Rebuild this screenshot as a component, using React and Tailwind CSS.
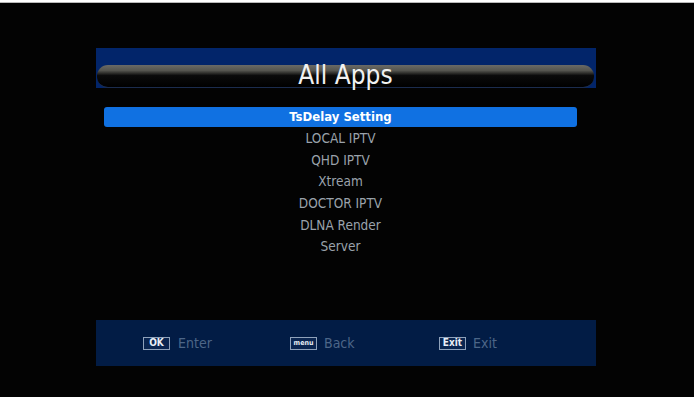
const APPS = ['TsDelay Setting', 'LOCAL IPTV', 'QHD IPTV', 'Xtream', 'DOCTOR IPTV', 'DLNA Render', 'Server']

function KeyCap({ label, small }) {
  return (
    <span
      className={
        'inline-flex items-center justify-center h-[13px] w-[27px] border border-[#8fa2bb] bg-[#0a2550] text-[#e8eef6] font-bold leading-none ' +
        (small ? 'text-[7px]' : 'text-[10px]')
      }
    >
      {label}
    </span>
  )
}

export default function App() {
  return (
    <div className="h-[397px] w-[694px] bg-[#030303] font-['DejaVu_Sans_Condensed','DejaVu_Sans',sans-serif] overflow-hidden">
      {/* top window edge */}
      <div className="h-[3px] bg-white border-b border-[#b9b9b9]" />

      <div className="ml-[96px] w-[500px] mt-[45px]">
        {/* header */}
        <div className="h-[40px] bg-[#02256a] pt-[17px] pl-[1px] pr-[2px]">
          <div className="h-[23px] rounded-[11px] bg-[linear-gradient(to_bottom,#6a6a66_0%,#55554f_25%,#0a0a0a_48%,#000_100%)] border-b border-[#1b2c4e] flex items-center justify-center">
            <span className="text-[26px] leading-none text-[#f1f1f1] -mt-[3px]">All Apps</span>
          </div>
        </div>

        {/* list */}
        <div className="mt-[18px] ml-[8px] w-[473px]">
          {APPS.map((app, i) => (
            <div key={app} className="h-[21.6px] flex items-center">
              {i === 0 ? (
                <div className="h-[20px] w-full rounded-[3px] bg-[#1071e2] flex items-center justify-center text-[13px] font-bold text-white">
                  {app}
                </div>
              ) : (
                <div className="w-full text-center text-[13.5px] text-[#9aa2ab]">{app}</div>
              )}
            </div>
          ))}
        </div>

        {/* footer */}
        <div className="mt-[63px] h-[46px] bg-[#021c45] flex items-center pl-[47px] text-[14px] text-[#4d6688]">
          <div className="w-[147px] flex items-center gap-[8px]">
            <KeyCap label="OK" />
            <span>Enter</span>
          </div>
          <div className="w-[149px] flex items-center gap-[7px]">
            <KeyCap label="menu" small />
            <span>Back</span>
          </div>
          <div className="flex items-center gap-[7px]">
            <KeyCap label="Exit" />
            <span>Exit</span>
          </div>
        </div>
      </div>
    </div>
  )
}
